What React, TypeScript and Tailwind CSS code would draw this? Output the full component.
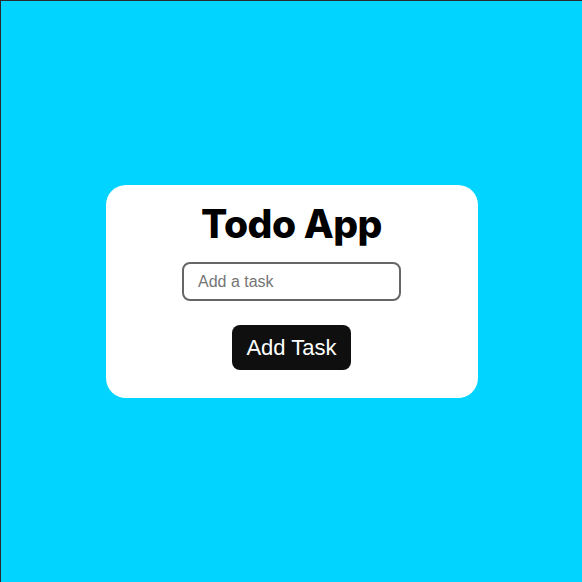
import React, { useState } from 'react';

const App: React.FC = () => {
  const [task, setTask] = useState('');

  return (
    <div className="w-[582px] h-[582px] bg-[#00d4ff] border-t border-l border-[#2a2a2a] flex items-center justify-center">
      <div className="w-[372px] h-[213px] bg-white rounded-[20px] flex flex-col items-center pt-[14px]">
        <h1 className="[font-family:Inter,'Noto_Sans',sans-serif] font-extrabold text-[39px] leading-[50px] tracking-[-0.5px] text-black">
          Todo App
        </h1>
        <input
          type="text"
          value={task}
          onChange={(e) => setTask(e.target.value)}
          placeholder="Add a task"
          className="mt-[13px] w-[219px] h-[39px] border-2 border-[#666] rounded-lg px-[14px] font-['Liberation_Sans',Arial,sans-serif] text-[16px] placeholder:text-[#757575] outline-none"
        />
        <button className="mt-[24px] w-[119px] h-[45px] bg-[#0f0f0f] text-white rounded-lg font-['Liberation_Sans',Arial,sans-serif] text-[22px]">
          Add Task
        </button>
      </div>
    </div>
  );
};

export default App;
